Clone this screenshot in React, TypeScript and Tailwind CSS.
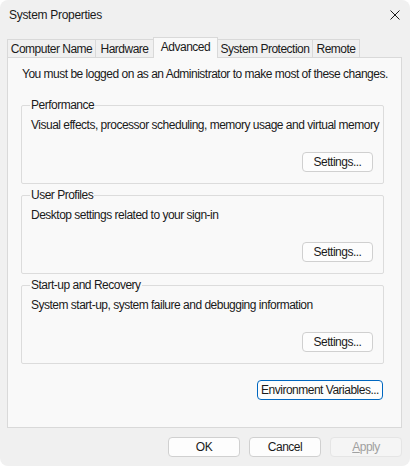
import React from "react";

const font = { fontFamily: '"Liberation Sans", Arial, sans-serif' };

type Tab = { label: string; w: string; active?: boolean };

const tabs: Tab[] = [
  { label: "Computer Name", w: "w-[89px]" },
  { label: "Hardware", w: "w-[59px]" },
  { label: "Advanced", w: "w-[65px]", active: true },
  { label: "System Protection", w: "w-[96px]" },
  { label: "Remote", w: "w-[48px]" },
];

function Button({ children, className = "" }: { children: React.ReactNode; className?: string }) {
  return (
    <button
      className={`h-[20px] rounded-[4px] border border-[#d0d0d0] bg-[#fdfdfd] text-[12px] leading-none text-[#1a1a1a] whitespace-nowrap ${className}`}
    >
      {children}
    </button>
  );
}

function GroupBox({ title, text }: { title: string; text: string }) {
  return (
    <fieldset className="w-[363px] min-w-0 border border-[#dcdcdc] rounded-[2px] pl-[9px] pr-[10px] pb-[11px]">
      <legend className="ml-[-1px] px-[1px] text-[12px] leading-[16px]">{title}</legend>
      <p className="mt-[4px] text-[12px] leading-[16px] whitespace-nowrap">{text}</p>
      <div className="mt-[19px] flex justify-end">
        <Button className="w-[71px]">Settings...</Button>
      </div>
    </fieldset>
  );
}

export default function App() {
  return (
    <div className="w-[410px] h-[466px] bg-white text-[#1a1a1a] tracking-[-0.5px]" style={font}>
      <div className="w-full h-full rounded-lg bg-[#f0f0f0] flex flex-col">
        {/* title bar */}
        <div className="h-[30px] flex items-center justify-between pl-[9px] pr-[10px]">
          <span className="text-[12px] tracking-[-0.3px]">System Properties</span>
          <svg width="10" height="10" viewBox="0 0 10 10">
            <path d="M0.5 0.5 L9.5 9.5 M9.5 0.5 L0.5 9.5" stroke="#1a1a1a" strokeWidth="1" />
          </svg>
        </div>

        {/* tab strip */}
        <div className="mt-[7px] ml-[7px] h-[20px] flex items-end">
          {tabs.map((t, i) => (
            <div
              key={t.label}
              className={
                t.active
                  ? `${t.w} h-[21px] -mb-px -ml-px relative z-10 border border-b-0 border-[#d9d9d9] bg-[#f9f9f9] text-[12px] whitespace-nowrap flex items-center justify-center pb-[2px]`
                  : `${t.w} h-[18px] ${i > 0 ? "-ml-px" : ""} border border-b-0 border-[#d9d9d9] bg-[#f0f0f0] text-[12px] whitespace-nowrap flex items-center justify-center`
              }
            >
              {t.label}
            </div>
          ))}
        </div>

        {/* Advanced page */}
        <div className="ml-[7px] w-[395px] h-[371px] border border-[#d9d9d9] bg-[#f9f9f9] pt-[8px] pl-[13px]">
          <p className="pl-[1px] text-[12px] leading-[16px] whitespace-nowrap">
            You must be logged on as an Administrator to make most of these changes.
          </p>
          <div className="mt-[15px] flex flex-col gap-[3px]">
            <GroupBox
              title="Performance"
              text="Visual effects, processor scheduling, memory usage and virtual memory"
            />
            <GroupBox title="User Profiles" text="Desktop settings related to your sign-in" />
            <GroupBox
              title="Start-up and Recovery"
              text="System start-up, system failure and debugging information"
            />
          </div>
          <div className="mt-[16px] w-[362px] flex justify-end">
            <button className="w-[126px] h-[20px] rounded-[4px] border border-[#0067c0] bg-[#fdfdfd] text-[12px] leading-none whitespace-nowrap">
              Environment Variables...
            </button>
          </div>
        </div>

        {/* dialog buttons */}
        <div className="mt-[9px] pr-[8px] flex justify-end gap-[9px]">
          <Button className="w-[72px]">OK</Button>
          <Button className="w-[72px]">Cancel</Button>
          <button className="w-[72px] h-[20px] rounded-[4px] border border-[#e5e5e5] bg-[#f5f5f5] text-[12px] leading-none text-[#a0a0a0]">
            <span className="underline">A</span>pply
          </button>
        </div>
      </div>
    </div>
  );
}
